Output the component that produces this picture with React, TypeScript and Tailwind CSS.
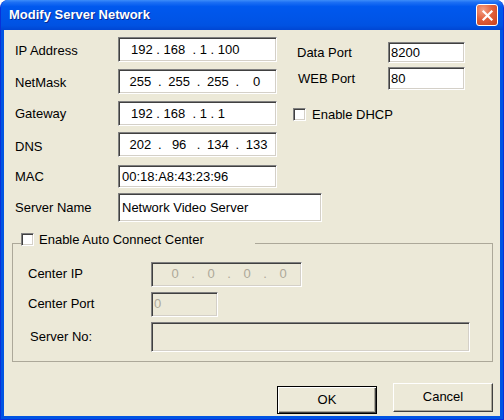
import type { ReactNode } from 'react'

const sunken =
  'border border-t-[#808080] border-l-[#808080] border-b-white border-r-white shadow-[inset_1px_1px_0_#404040,inset_-1px_-1px_0_#D4D0C8]'

function Field({ w, h, disabled, children, className = '' }: {
  w: string
  h: string
  disabled?: boolean
  children?: ReactNode
  className?: string
}) {
  return (
    <div
      className={`${w} ${h} ${sunken} flex items-center shrink-0 ${disabled ? 'bg-[#ECE9D8] text-[#ACA899]' : 'bg-white text-black'} ${className}`}
    >
      {children}
    </div>
  )
}

// IP control: four equal cells with the dots sitting on the cell borders
function IpCells({ parts, pad }: { parts: string[]; pad: string }) {
  return (
    <div className={`flex w-full ${pad}`}>
      {parts.map((p, i) => (
        <div key={i} className="contents">
          {i > 0 && <span className="w-0 flex justify-center">.</span>}
          <span className="flex-1 text-center">{p}</span>
        </div>
      ))}
    </div>
  )
}

function Checkbox() {
  return <span className={`w-[13px] h-[13px] bg-white shrink-0 ${sunken}`} />
}

function Row({ label, labelClass = '', children, className = '' }: {
  label: string
  labelClass?: string
  children: ReactNode
  className?: string
}) {
  return (
    <div className={`flex items-center ${className}`}>
      <span className={`shrink-0 ${labelClass}`}>{label}</span>
      {children}
    </div>
  )
}

function Button({ label, isDefault, className = '' }: { label: string; isDefault?: boolean; className?: string }) {
  return (
    <button
      className={`w-[100px] flex items-center justify-center bg-[#ECE9D8] ${
        isDefault
          ? 'border border-black shadow-[inset_1px_1px_0_#fff,inset_-1px_-1px_0_#404040,inset_-2px_-2px_0_#ACA899]'
          : 'border border-t-white border-l-white border-b-[#404040] border-r-[#404040] shadow-[inset_-1px_-1px_0_#ACA899]'
      } ${className}`}
    >
      {label}
    </button>
  )
}

export default function App() {
  return (
    <div className="w-[504px] h-[420px] flex flex-col bg-[#0054E3] border border-t-0 border-[#0831D9] rounded-t-[8px] overflow-hidden font-['Liberation_Sans',Arial,sans-serif] text-[13px] text-black select-none">
      {/* title bar */}
      <div className="h-[30px] shrink-0 flex items-center justify-between pl-[8px] pr-[5px] bg-[linear-gradient(to_bottom,#3D8DF9_0%,#1C6FF4_8%,#0058EE_22%,#0055E8_60%,#0052E2_85%,#0046D3_100%)]">
        <span className="font-bold text-white text-[13px] [text-shadow:1px_1px_0_#0A2A8F]">Modify Server Network</span>
        <span className="w-[22px] h-[22px] rounded-[3px] border border-white flex items-center justify-center bg-[radial-gradient(circle_at_30%_25%,#F2A085_0%,#E2613C_45%,#C8401C_100%)]">
          <svg width="13" height="13" viewBox="0 0 13 13">
            <path d="M2.5 2.5 L10.5 10.5 M10.5 2.5 L2.5 10.5" stroke="#fff" strokeWidth="2.2" strokeLinecap="square" />
          </svg>
        </span>
      </div>

      {/* client area */}
      <div className="flex-1 mx-[3px] mb-[3px] bg-[#ECE9D8] flex flex-col">
        <div className="flex">
          <div className="w-[289px] pl-[11px] pt-[7px] flex flex-col">
            <Row label="IP Address" labelClass="w-[103px] pt-[2px]">
              <Field w="w-[159px]" h="h-[25px]">
                <span className="pl-[12px] whitespace-pre">192 . 168  . 1 . 100</span>
              </Field>
            </Row>
            <Row label="NetMask" labelClass="w-[103px] pt-[2px]" className="mt-[7px]">
              <Field w="w-[159px]" h="h-[25px]">
                <IpCells parts={['255', '255', '255', '0']} pad="pl-[2px]" />
              </Field>
            </Row>
            <Row label="Gateway" labelClass="w-[103px]" className="mt-[7px]">
              <Field w="w-[159px]" h="h-[25px]">
                <span className="pl-[12px] whitespace-pre">192 . 168  . 1 . 1</span>
              </Field>
            </Row>
            <Row label="DNS" labelClass="w-[103px] pt-[4px]" className="mt-[6px]">
              <Field w="w-[159px]" h="h-[25px]">
                <IpCells parts={['202', '96', '134', '133']} pad="pl-[2px]" />
              </Field>
            </Row>
            <Row label="MAC" labelClass="w-[103px]" className="mt-[8px]">
              <Field w="w-[159px]" h="h-[23px]">
                <span className="pl-[3px]">00:18:A8:43:23:96</span>
              </Field>
            </Row>
          </div>

          <div className="pt-[12px] flex flex-col">
            <Row label="Data Port" labelClass="w-[95px] pl-[4px]">
              <Field w="w-[77px]" h="h-[21px]">
                <span className="pl-[2px]">8200</span>
              </Field>
            </Row>
            <Row label="WEB Port" labelClass="w-[95px] pl-[5px]" className="mt-[4px]">
              <Field w="w-[77px]" h="h-[23px]">
                <span className="pl-[2px]">80</span>
              </Field>
            </Row>
            <div className="mt-[15px] flex items-center gap-[6px]">
              <Checkbox />
              <span>Enable DHCP</span>
            </div>
          </div>
        </div>

        <Row label="Server Name" labelClass="w-[103px]" className="mt-[5px] pl-[11px]">
          <Field w="w-[204px]" h="h-[29px]">
            <span className="pl-[3px]">Network Video Server</span>
          </Field>
        </Row>

        <fieldset className="mt-[8px] ml-[8px] w-[481px] border border-[#ACA899] pl-[15px] pb-[9px]">
          <legend className="ml-[-7px] w-[234px] pb-[7px] flex items-center gap-[5px]">
            <Checkbox />
            <span>Enable Auto Connect Center</span>
          </legend>
          <Row label="Center IP" labelClass="w-[123px]" className="mt-[5px]">
            <Field w="w-[151px]" h="h-[25px]" disabled>
              <IpCells parts={['0', '0', '0', '0']} pad="pl-[5px]" />
            </Field>
          </Row>
          <Row label="Center Port" labelClass="w-[123px]" className="mt-[5px]">
            <Field w="w-[67px]" h="h-[25px]" disabled>
              <span className="pl-[2px]">0</span>
            </Field>
          </Row>
          <Row label="Server No:" labelClass="w-[123px] pl-[2px]" className="mt-[5px]">
            <Field w="w-[319px]" h="h-[30px]" disabled />
          </Row>
        </fieldset>

        <div className="mt-[21px] pr-[7px] flex justify-end items-start gap-[16px]">
          <Button label="OK" isDefault className="mt-[3px] h-[28px]" />
          <Button label="Cancel" className="h-[29px]" />
        </div>
      </div>
    </div>
  )
}
